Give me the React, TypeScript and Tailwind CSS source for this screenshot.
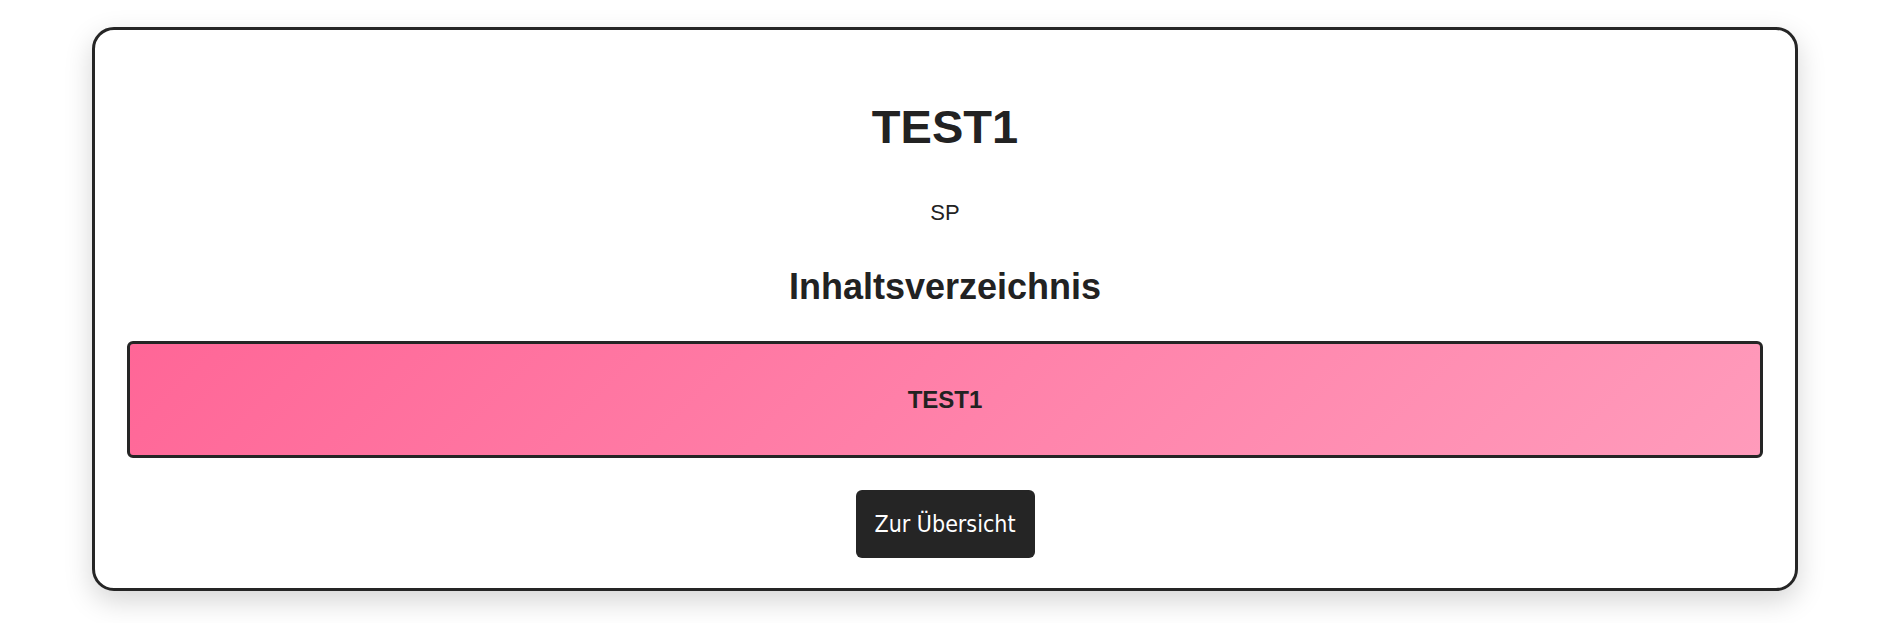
import React from "react";

export default function App() {
  return (
    <div className="min-h-[623px] w-full bg-white pt-[27px] font-['Liberation_Sans',Arial,sans-serif] text-[#222222]">
      <div className="mx-auto w-[1706px] rounded-[22px] border-[3px] border-[#252525] bg-white px-[32px] pb-[30px] pt-[70px] shadow-[0_10px_28px_rgba(0,0,0,0.17)]">
        <h1 className="text-center text-[47px] font-bold leading-[54px]">TEST1</h1>
        <p className="mt-[46px] text-center text-[22px] leading-[25px]">SP</p>
        <h2 className="mt-[41px] text-center text-[36px] font-bold leading-[41px]">Inhaltsverzeichnis</h2>
        <div className="mt-[34px] flex h-[117px] items-center justify-center rounded-[6px] border-[3px] border-[#252525] bg-[linear-gradient(135deg,#ff6697,#ff9bbb)]">
          <span className="text-[24px] font-bold leading-[28px]">TEST1</span>
        </div>
        <div className="mt-[32px] flex justify-center">
          <button className="flex h-[68px] w-[179px] items-center justify-center rounded-[6px] bg-[#252525] font-['DejaVu_Sans_Condensed','DejaVu_Sans',sans-serif] text-[23px] text-white">
            Zur Übersicht
          </button>
        </div>
      </div>
    </div>
  );
}
